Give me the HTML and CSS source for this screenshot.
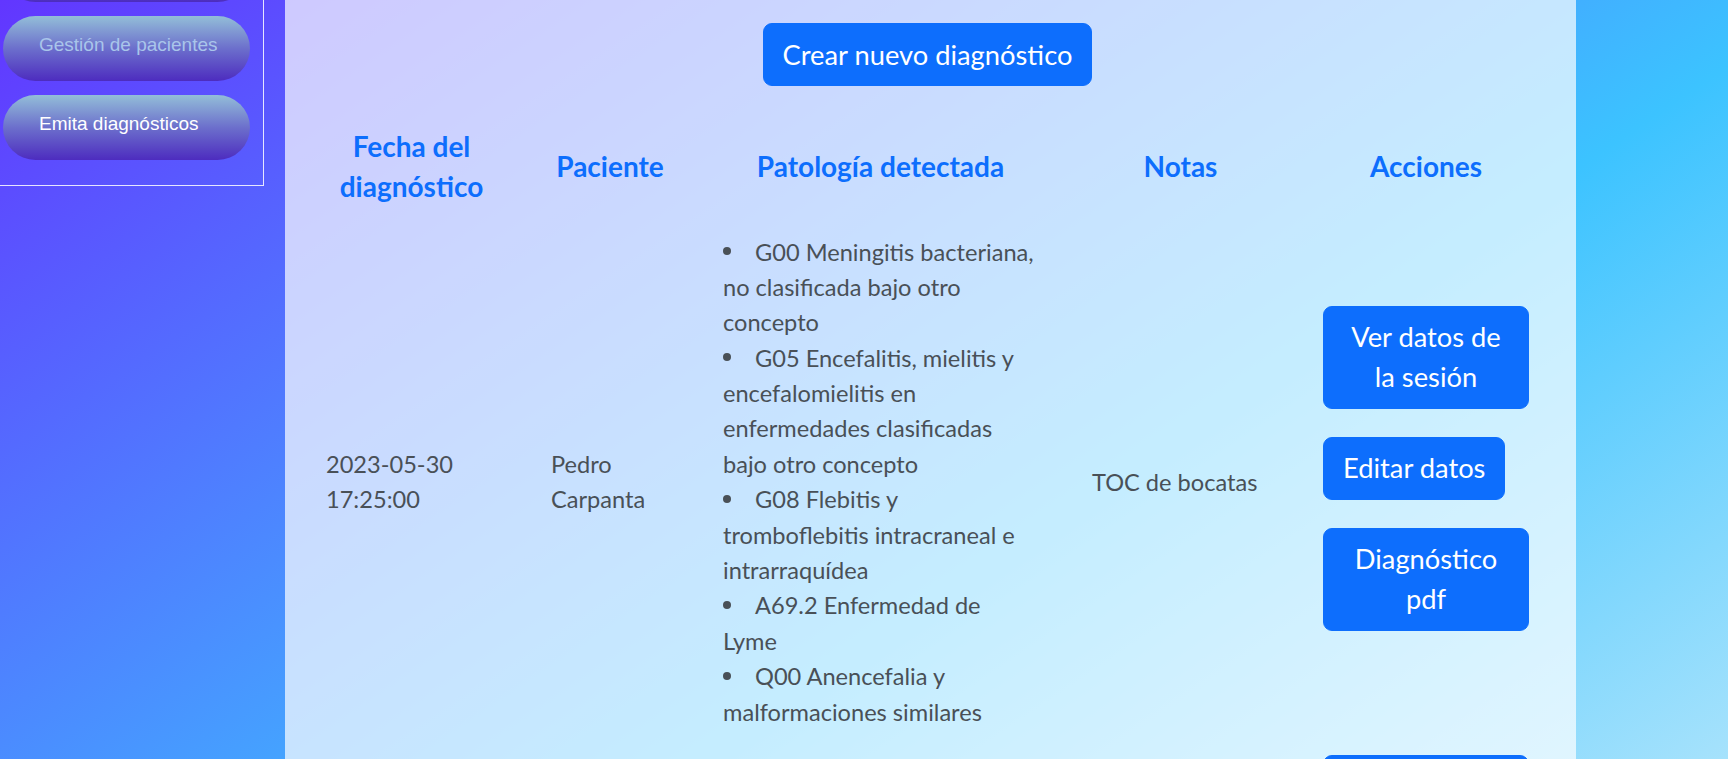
FILE: index.html
```html
<!DOCTYPE html>
<html lang="es">
<head>
<meta charset="utf-8">
<title>Diagnósticos</title>
<link rel="stylesheet" href="styles.css">
</head>
<body>
<div class="layout">
  <aside class="sidebar">
    <nav class="side-box">
      <a class="pill" href="#">Inicio</a>
      <a class="pill pill-muted" href="#">Gestión de pacientes</a>
      <a class="pill" href="#">Emita diagnósticos</a>
    </nav>
  </aside>
  <main class="main">
    <div class="toolbar">
      <a class="btn" href="#">Crear nuevo diagnóstico</a>
    </div>
    <table class="diag-table">
      <colgroup>
        <col class="col-date">
        <col class="col-patient">
        <col class="col-path">
        <col class="col-notes">
        <col class="col-actions">
      </colgroup>
      <thead>
        <tr>
          <th>Fecha del diagnóstico</th>
          <th>Paciente</th>
          <th>Patología detectada</th>
          <th>Notas</th>
          <th>Acciones</th>
        </tr>
      </thead>
      <tbody>
        <tr>
          <td>2023-05-30 17:25:00</td>
          <td>Pedro Carpanta</td>
          <td>
            <ul class="path-list">
              <li>G00 Meningitis bacteriana, no clasificada bajo otro concepto</li>
              <li>G05 Encefalitis, mielitis y encefalomielitis en enfermedades clasificadas bajo otro concepto</li>
              <li>G08 Flebitis y tromboflebitis intracraneal e intrarraquídea</li>
              <li>A69.2 Enfermedad de Lyme</li>
              <li>Q00 Anencefalia y malformaciones similares</li>
            </ul>
          </td>
          <td>TOC de bocatas</td>
          <td>
            <div class="actions">
              <a class="btn" href="#">Ver datos de la sesión</a>
              <a class="btn" href="#">Editar datos</a>
              <a class="btn" href="#">Diagnóstico pdf</a>
            </div>
          </td>
        </tr>
        <tr>
          <td>2023-05-30 17:40:00</td>
          <td>Pedro Carpanta</td>
          <td>
            <ul class="path-list">
              <li>G00 Meningitis bacteriana</li>
            </ul>
          </td>
          <td>Revisión</td>
          <td>
            <div class="actions">
              <a class="btn" href="#">Ver datos de la sesión</a>
              <a class="btn" href="#">Editar datos</a>
              <a class="btn" href="#">Diagnóstico pdf</a>
            </div>
          </td>
        </tr>
      </tbody>
    </table>
  </main>
</div>
</body>
</html>
```
FILE: styles.css
```css
* {
  box-sizing: border-box;
}

html,
body {
  height: 100%;
  margin: 0;
  overflow: hidden;
}

body {
  background: linear-gradient(146deg, #6236ff 0%, #3cc3ff 64%, #a6e2fc 100%);
  font-family: Lato, "Noto Sans", sans-serif;
}

.layout {
  display: flex;
  align-items: stretch;
  min-height: 100%;
}

/* Sidebar */
.sidebar {
  flex: 0 0 285px;
}

.side-box {
  width: 264px;
  margin-top: -77px;
  padding: 14px 0 25px 3px;
  border-right: 1px solid rgba(255, 255, 255, 0.85);
  border-bottom: 1px solid rgba(255, 255, 255, 0.85);
  display: flex;
  flex-direction: column;
  gap: 14px;
}

.pill {
  display: flex;
  align-items: center;
  width: 247px;
  height: 65px;
  padding: 0 0 7px 36px;
  border-radius: 33px;
  background: linear-gradient(180deg, #93bed8 0%, #6c6fcc 50%, #4d2cbf 100%);
  color: #ffffff;
  font-family: "Liberation Sans", Arial, sans-serif;
  font-size: 19px;
  text-decoration: none;
}

.pill-muted {
  color: #a9c5ea;
}

/* Main panel */
.main {
  flex: 0 0 1291px;
  min-width: 0;
  min-height: 759px;
  padding: 0 20px 0 14px;
  background: rgba(255, 255, 255, 0.7);
}

.toolbar {
  display: flex;
  justify-content: center;
  padding-top: 23px;
}

.btn {
  display: inline-block;
  padding: 10.5px 19px;
  border: 1px solid #0d6efd;
  border-radius: 9px;
  background: #0d6efd;
  color: #ffffff;
  font-size: 27.3px;
  line-height: 40px;
  text-align: center;
  text-decoration: none;
}

/* Table */
.diag-table {
  width: 100%;
  margin-top: 28px;
  border-collapse: collapse;
  table-layout: fixed;
}

.col-date { width: 225px; }
.col-patient { width: 172px; }
.col-path { width: 369px; }
.col-notes { width: 231px; }
.col-actions { width: 260px; }

.diag-table th {
  padding: 12px 27px 16px;
  color: #0d6efd;
  font-size: 28px;
  font-weight: 700;
  line-height: 40px;
  text-align: center;
  vertical-align: middle;
}

.diag-table td {
  padding: 12.5px 27px;
  color: #495057;
  font-size: 23.6px;
  line-height: 1.5;
  text-align: left;
  vertical-align: middle;
}

.path-list {
  margin: 0;
  padding: 0;
  list-style: none;
}

.path-list li::before {
  content: "";
  display: inline-block;
  width: 8px;
  height: 8px;
  margin-right: 24px;
  border-radius: 50%;
  background: currentColor;
  vertical-align: 0.22em;
}

.actions {
  display: flex;
  flex-direction: column;
  align-items: flex-start;
}

.actions .btn {
  max-width: 100%;
  margin-bottom: 28px;
}
```
